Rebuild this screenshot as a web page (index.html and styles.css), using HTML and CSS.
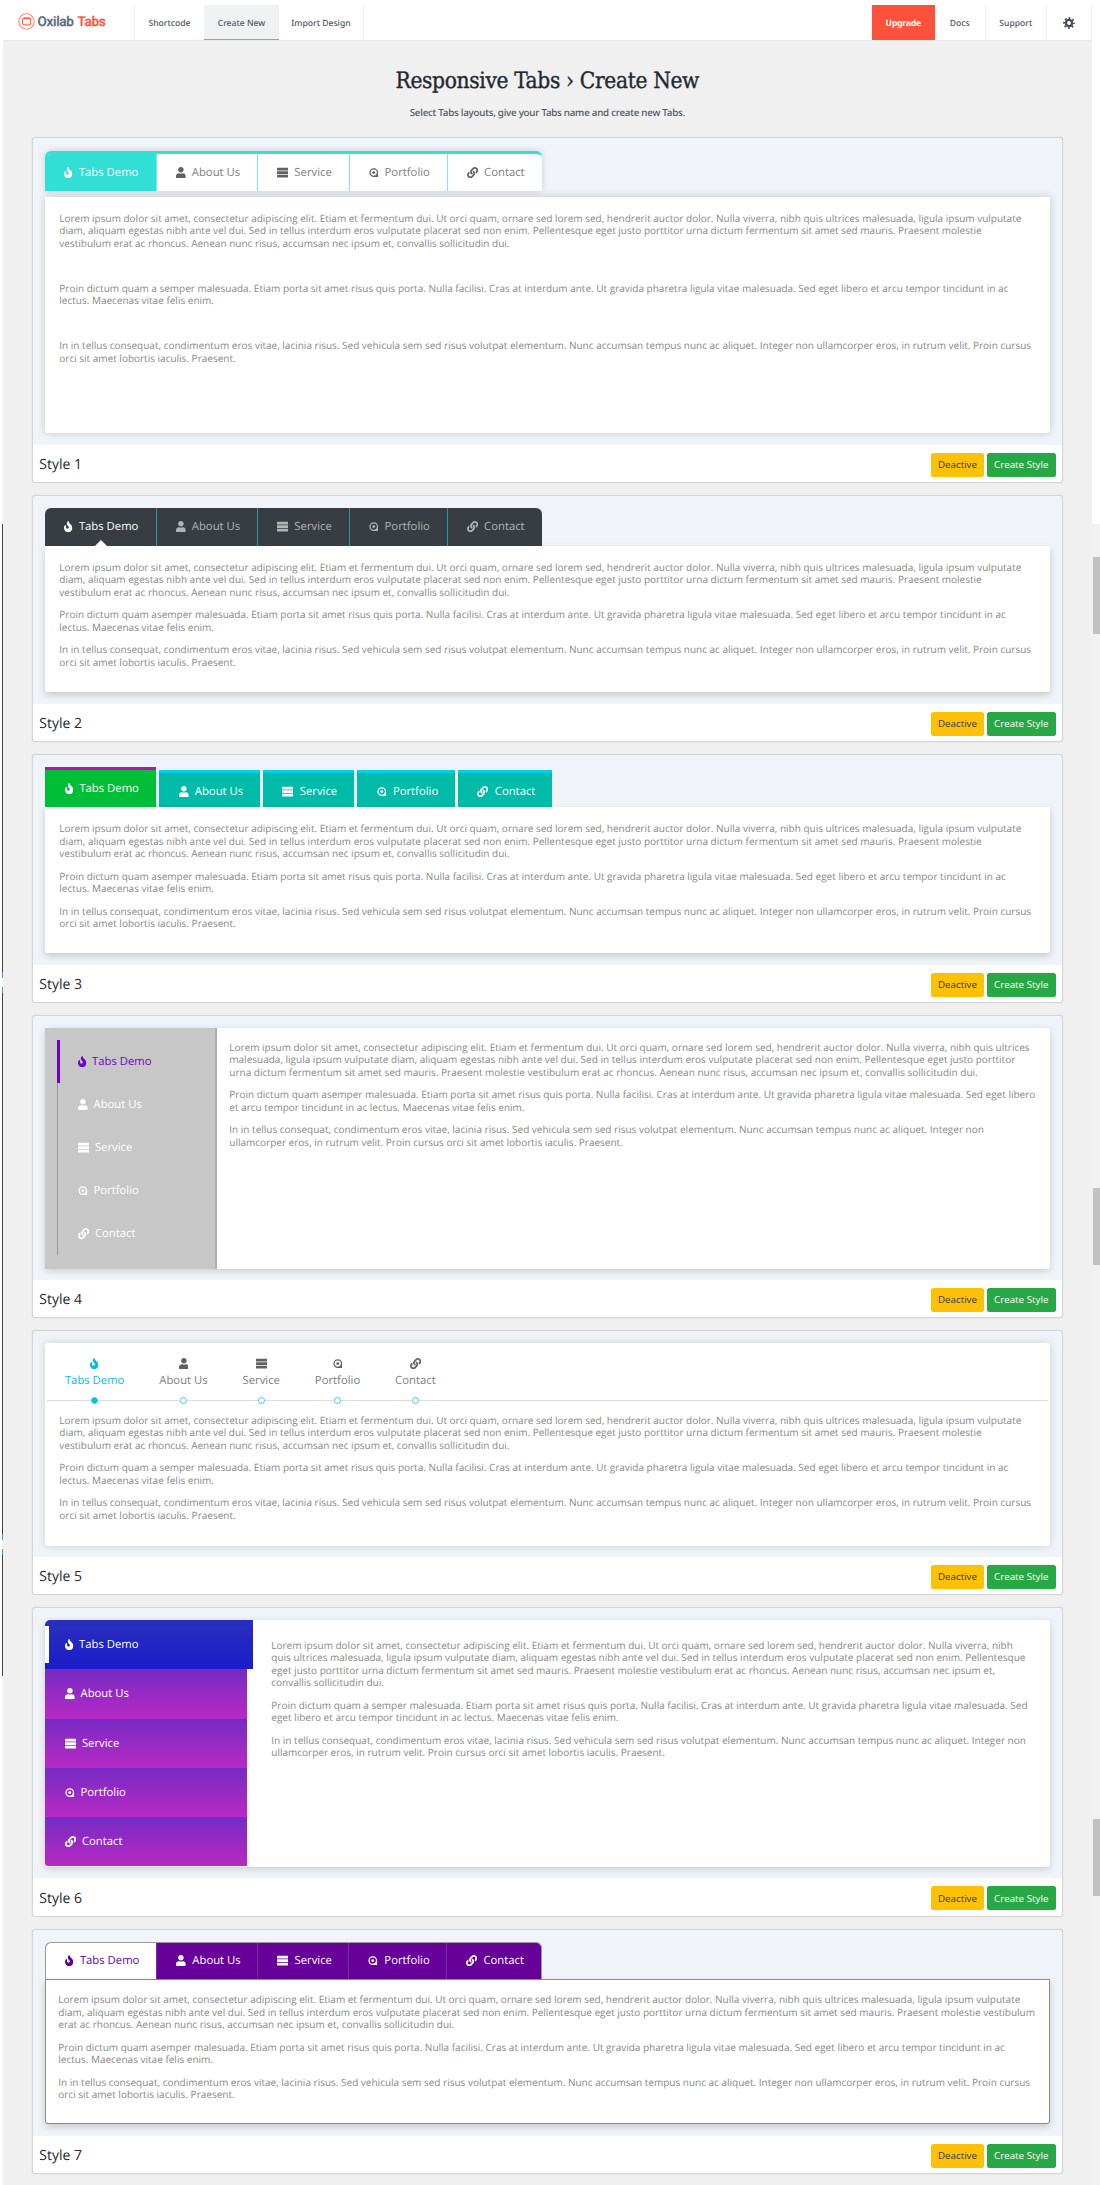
FILE: index.html
```html
<!DOCTYPE html>
<html lang="en">
<head>
<meta charset="utf-8">
<title>Responsive Tabs › Create New</title>
<link rel="stylesheet" href="styles.css">
</head>
<body>
<svg class="sprite" aria-hidden="true">
  <symbol id="fire" viewBox="0 0 384 512"><path d="M216 23.86c0-23.8-30.65-32.77-44.15-13.04C48 191.85 224 200 224 288c0 35.63-29.11 64.46-64.85 63.99-35.17-.45-63.15-29.77-63.15-64.94v-85.51c0-21.7-26.47-32.23-41.43-16.5C27.8 213.16 0 261.33 0 320c0 105.87 86.13 192 192 192s192-86.13 192-192c0-170.29-168-193-168-296.14z"/></symbol>
  <symbol id="user" viewBox="0 0 448 512"><path d="M224 256c70.7 0 128-57.3 128-128S294.7 0 224 0 96 57.3 96 128s57.3 128 128 128zm89.6 32h-16.7c-22.2 10.2-46.9 16-72.9 16s-50.6-5.8-72.9-16h-16.7C60.2 288 0 348.2 0 422.4V464c0 26.5 21.5 48 48 48h352c26.5 0 48-21.5 48-48v-41.6c0-74.2-60.2-134.4-134.4-134.4z"/></symbol>
  <symbol id="server" viewBox="0 0 512 512"><path d="M24 32h464a24 24 0 0 1 24 24v80a24 24 0 0 1-24 24H24a24 24 0 0 1-24-24V56a24 24 0 0 1 24-24zM24 192h464a24 24 0 0 1 24 24v80a24 24 0 0 1-24 24H24a24 24 0 0 1-24-24v-80a24 24 0 0 1 24-24zM24 352h464a24 24 0 0 1 24 24v80a24 24 0 0 1-24 24H24a24 24 0 0 1-24-24v-80a24 24 0 0 1 24-24z"/></symbol>
  <symbol id="portfolio" viewBox="0 0 448 512"><circle cx="218" cy="256" r="172" fill="none" stroke="currentColor" stroke-width="58"/><circle cx="218" cy="256" r="66"/><path d="M218 400h200v58H218zM360 300h58v158h-58z"/></symbol>
  <symbol id="link" viewBox="0 0 512 512"><path d="M326.612 185.391c59.747 59.809 58.927 155.698.36 214.59-.11.12-.24.25-.36.37l-67.2 67.2c-59.27 59.27-155.699 59.262-214.96 0-59.27-59.26-59.27-155.7 0-214.96l37.106-37.106c9.84-9.84 26.786-3.3 27.294 10.606.648 17.722 3.826 35.527 9.69 52.721 1.986 5.822.567 12.262-3.783 16.612l-13.087 13.087c-28.026 28.026-28.905 73.66-1.155 101.96 28.024 28.579 74.086 28.749 102.325.51l67.2-67.19c28.191-28.191 28.073-73.757 0-101.83-3.701-3.694-7.429-6.564-10.341-8.569a16.037 16.037 0 0 1-6.947-12.606c-.396-10.567 3.348-21.456 11.698-29.806l21.054-21.055c5.521-5.521 14.182-6.199 20.584-1.731a152.482 152.482 0 0 1 20.522 17.197zM467.547 44.449c-59.261-59.262-155.69-59.27-214.96 0l-67.2 67.2c-.12.12-.25.25-.36.37-58.566 58.892-59.387 154.781.36 214.59a152.454 152.454 0 0 0 20.521 17.196c6.402 4.468 15.064 3.789 20.584-1.731l21.054-21.055c8.35-8.35 12.094-19.239 11.698-29.806a16.037 16.037 0 0 0-6.947-12.606c-2.912-2.005-6.64-4.875-10.341-8.569-28.073-28.073-28.191-73.639 0-101.83l67.2-67.19c28.239-28.239 74.3-28.069 102.325.51 27.75 28.3 26.872 73.934-1.155 101.96l-13.087 13.087c-4.35 4.35-5.769 10.79-3.783 16.612 5.864 17.194 9.042 34.999 9.69 52.721.509 13.906 17.454 20.446 27.294 10.606l37.106-37.106c59.271-59.259 59.271-155.699.001-214.959z"/></symbol>
</svg>
<div class="shell">
  <aside class="edge-left"><i class="gap1"></i><i class="dark d1"></i><i class="blue"></i><i class="notch"></i><i class="blue"></i><i class="dark d2"></i><i class="blue"></i><i class="notch"></i><i class="blue"></i><i class="dark d3"></i></aside>
  <main class="page">
    <header class="top">
      <div class="brand">
        <svg width="17" height="17" viewBox="0 0 17 17" fill="none" stroke="#ff8a6c"><circle cx="8.5" cy="8.5" r="7.7" stroke-width="1.1"/><rect x="4.6" y="5.2" width="8" height="6.6" rx="1.4" stroke="#ff6f4e" stroke-width="1.3"/><path d="M6 5.4h6" stroke="#ff5a36" stroke-width="1.6"/></svg>
        <span class="name">Oxilab</span><span class="name accent">Tabs</span>
      </div>
      <nav class="menu"><a class="m1">Shortcode</a><a class="m2 current">Create New</a><a class="m3">Import Design</a></nav>
      <nav class="links"><a class="upgrade">Upgrade</a><a class="l2">Docs</a><a class="l3">Support</a><a class="l4"><svg width="12" height="12" viewBox="0 0 22 22" fill="none" stroke="#454d55"><circle cx="11" cy="11" r="5.7" stroke-width="4.4"/><circle cx="11" cy="11" r="9.2" stroke-width="3.4" pathLength="160" stroke-dasharray="9 11" stroke-dashoffset="4.5"/></svg></a></nav>
    </header>
    <h1><span>Responsive Tabs › Create New</span></h1>
    <p class="lead">Select Tabs layouts, give your Tabs name and create new Tabs.</p>

    <section class="card c1">
      <div class="tabs bar">
        <a class="on"><svg class="i fire"><use href="#fire"/></svg>Tabs Demo</a><a><svg class="i user"><use href="#user"/></svg>About Us</a><a><svg class="i server"><use href="#server"/></svg>Service</a><a><svg class="i user"><use href="#portfolio"/></svg>Portfolio</a><a><svg class="i server"><use href="#link"/></svg>Contact</a>
      </div>
      <div class="panel">
        <p>Lorem ipsum dolor sit amet, consectetur adipiscing elit. Etiam et fermentum dui. Ut orci quam, ornare sed lorem sed, hendrerit auctor dolor. Nulla viverra, nibh quis ultrices malesuada, ligula ipsum vulputate<br>diam, aliquam egestas nibh ante vel dui. Sed in tellus interdum eros vulputate placerat sed non enim. Pellentesque eget justo porttitor urna dictum fermentum sit amet sed mauris. Praesent molestie<br>vestibulum erat ac rhoncus. Aenean nunc risus, accumsan nec ipsum et, convallis sollicitudin dui.</p>
        <p>&nbsp;</p>
        <p>Proin dictum quam a semper malesuada. Etiam porta sit amet risus quis porta. Nulla facilisi. Cras at interdum ante. Ut gravida pharetra ligula vitae malesuada. Sed eget libero et arcu tempor tincidunt in ac<br>lectus. Maecenas vitae felis enim.</p>
        <p>&nbsp;</p>
        <p>In in tellus consequat, condimentum eros vitae, lacinia risus. Sed vehicula sem sed risus volutpat elementum. Nunc accumsan tempus nunc ac aliquet. Integer non ullamcorper eros, in rutrum velit. Proin cursus<br>orci sit amet lobortis iaculis. Praesent.</p>
      </div>
      <footer><h2>Style 1</h2><button class="warn">Deactive</button><button class="ok">Create Style</button></footer>
    </section>

    <section class="card c2">
      <div class="tabs bar">
        <a class="on"><svg class="i fire"><use href="#fire"/></svg>Tabs Demo</a><a><svg class="i user"><use href="#user"/></svg>About Us</a><a><svg class="i server"><use href="#server"/></svg>Service</a><a><svg class="i user"><use href="#portfolio"/></svg>Portfolio</a><a><svg class="i server"><use href="#link"/></svg>Contact</a>
      </div>
      <div class="panel">
        <p>Lorem ipsum dolor sit amet, consectetur adipiscing elit. Etiam et fermentum dui. Ut orci quam, ornare sed lorem sed, hendrerit auctor dolor. Nulla viverra, nibh quis ultrices malesuada, ligula ipsum vulputate<br>diam, aliquam egestas nibh ante vel dui. Sed in tellus interdum eros vulputate placerat sed non enim. Pellentesque eget justo porttitor urna dictum fermentum sit amet sed mauris. Praesent molestie<br>vestibulum erat ac rhoncus. Aenean nunc risus, accumsan nec ipsum et, convallis sollicitudin dui.</p>
        <p>Proin dictum quam asemper malesuada. Etiam porta sit amet risus quis porta. Nulla facilisi. Cras at interdum ante. Ut gravida pharetra ligula vitae malesuada. Sed eget libero et arcu tempor tincidunt in ac<br>lectus. Maecenas vitae felis enim.</p>
        <p>In in tellus consequat, condimentum eros vitae, lacinia risus. Sed vehicula sem sed risus volutpat elementum. Nunc accumsan tempus nunc ac aliquet. Integer non ullamcorper eros, in rutrum velit. Proin cursus<br>orci sit amet lobortis iaculis. Praesent.</p>
      </div>
      <footer><h2>Style 2</h2><button class="warn">Deactive</button><button class="ok">Create Style</button></footer>
    </section>

    <section class="card c3">
      <div class="tabs blocks">
        <a class="on"><svg class="i fire"><use href="#fire"/></svg>Tabs Demo</a><a><svg class="i user"><use href="#user"/></svg>About Us</a><a><svg class="i server"><use href="#server"/></svg>Service</a><a><svg class="i user"><use href="#portfolio"/></svg>Portfolio</a><a><svg class="i server"><use href="#link"/></svg>Contact</a>
      </div>
      <div class="panel">
        <p>Lorem ipsum dolor sit amet, consectetur adipiscing elit. Etiam et fermentum dui. Ut orci quam, ornare sed lorem sed, hendrerit auctor dolor. Nulla viverra, nibh quis ultrices malesuada, ligula ipsum vulputate<br>diam, aliquam egestas nibh ante vel dui. Sed in tellus interdum eros vulputate placerat sed non enim. Pellentesque eget justo porttitor urna dictum fermentum sit amet sed mauris. Praesent molestie<br>vestibulum erat ac rhoncus. Aenean nunc risus, accumsan nec ipsum et, convallis sollicitudin dui.</p>
        <p>Proin dictum quam asemper malesuada. Etiam porta sit amet risus quis porta. Nulla facilisi. Cras at interdum ante. Ut gravida pharetra ligula vitae malesuada. Sed eget libero et arcu tempor tincidunt in ac<br>lectus. Maecenas vitae felis enim.</p>
        <p>In in tellus consequat, condimentum eros vitae, lacinia risus. Sed vehicula sem sed risus volutpat elementum. Nunc accumsan tempus nunc ac aliquet. Integer non ullamcorper eros, in rutrum velit. Proin cursus<br>orci sit amet lobortis iaculis. Praesent.</p>
      </div>
      <footer><h2>Style 3</h2><button class="warn">Deactive</button><button class="ok">Create Style</button></footer>
    </section>

    <section class="card c4">
      <div class="split">
        <div class="side"><div class="rail">
          <a class="on"><svg class="i fire"><use href="#fire"/></svg>Tabs Demo</a><a><svg class="i user"><use href="#user"/></svg>About Us</a><a><svg class="i server"><use href="#server"/></svg>Service</a><a><svg class="i user"><use href="#portfolio"/></svg>Portfolio</a><a><svg class="i server"><use href="#link"/></svg>Contact</a>
        </div></div>
        <div class="text">
          <p>Lorem ipsum dolor sit amet, consectetur adipiscing elit. Etiam et fermentum dui. Ut orci quam, ornare sed lorem sed, hendrerit auctor dolor. Nulla viverra, nibh quis ultrices<br>malesuada, ligula ipsum vulputate diam, aliquam egestas nibh ante vel dui. Sed in tellus interdum eros vulputate placerat sed non enim. Pellentesque eget justo porttitor<br>urna dictum fermentum sit amet sed mauris. Praesent molestie vestibulum erat ac rhoncus. Aenean nunc risus, accumsan nec ipsum et, convallis sollicitudin dui.</p>
          <p>Proin dictum quam asemper malesuada. Etiam porta sit amet risus quis porta. Nulla facilisi. Cras at interdum ante. Ut gravida pharetra ligula vitae malesuada. Sed eget libero<br>et arcu tempor tincidunt in ac lectus. Maecenas vitae felis enim.</p>
          <p>In in tellus consequat, condimentum eros vitae, lacinia risus. Sed vehicula sem sed risus volutpat elementum. Nunc accumsan tempus nunc ac aliquet. Integer non<br>ullamcorper eros, in rutrum velit. Proin cursus orci sit amet lobortis iaculis. Praesent.</p>
        </div>
      </div>
      <footer><h2>Style 4</h2><button class="warn">Deactive</button><button class="ok">Create Style</button></footer>
    </section>

    <section class="card c5">
      <div class="panel">
        <div class="steps">
          <a class="on"><svg class="i fire"><use href="#fire"/></svg>Tabs Demo<b></b></a><a><svg class="i user"><use href="#user"/></svg>About Us<b></b></a><a><svg class="i server"><use href="#server"/></svg>Service<b></b></a><a><svg class="i user"><use href="#portfolio"/></svg>Portfolio<b></b></a><a><svg class="i server"><use href="#link"/></svg>Contact<b></b></a>
        </div>
        <p>Lorem ipsum dolor sit amet, consectetur adipiscing elit. Etiam et fermentum dui. Ut orci quam, ornare sed lorem sed, hendrerit auctor dolor. Nulla viverra, nibh quis ultrices malesuada, ligula ipsum vulputate<br>diam, aliquam egestas nibh ante vel dui. Sed in tellus interdum eros vulputate placerat sed non enim. Pellentesque eget justo porttitor urna dictum fermentum sit amet sed mauris. Praesent molestie<br>vestibulum erat ac rhoncus. Aenean nunc risus, accumsan nec ipsum et, convallis sollicitudin dui.</p>
        <p>Proin dictum quam a semper malesuada. Etiam porta sit amet risus quis porta. Nulla facilisi. Cras at interdum ante. Ut gravida pharetra ligula vitae malesuada. Sed eget libero et arcu tempor tincidunt in ac<br>lectus. Maecenas vitae felis enim.</p>
        <p>In in tellus consequat, condimentum eros vitae, lacinia risus. Sed vehicula sem sed risus volutpat elementum. Nunc accumsan tempus nunc ac aliquet. Integer non ullamcorper eros, in rutrum velit. Proin cursus<br>orci sit amet lobortis iaculis. Praesent.</p>
      </div>
      <footer><h2>Style 5</h2><button class="warn">Deactive</button><button class="ok">Create Style</button></footer>
    </section>

    <section class="card c6">
      <div class="split">
        <div class="stack">
          <a class="on"><svg class="i fire"><use href="#fire"/></svg>Tabs Demo</a><a><svg class="i user"><use href="#user"/></svg>About Us</a><a><svg class="i server"><use href="#server"/></svg>Service</a><a><svg class="i user"><use href="#portfolio"/></svg>Portfolio</a><a><svg class="i server"><use href="#link"/></svg>Contact</a>
        </div>
        <div class="text">
          <p>Lorem ipsum dolor sit amet, consectetur adipiscing elit. Etiam et fermentum dui. Ut orci quam, ornare sed lorem sed, hendrerit auctor dolor. Nulla viverra, nibh<br>quis ultrices malesuada, ligula ipsum vulputate diam, aliquam egestas nibh ante vel dui. Sed in tellus interdum eros vulputate placerat sed non enim. Pellentesque<br>eget justo porttitor urna dictum fermentum sit amet sed mauris. Praesent molestie vestibulum erat ac rhoncus. Aenean nunc risus, accumsan nec ipsum et,<br>convallis sollicitudin dui.</p>
          <p>Proin dictum quam a semper malesuada. Etiam porta sit amet risus quis porta. Nulla facilisi. Cras at interdum ante. Ut gravida pharetra ligula vitae malesuada. Sed<br>eget libero et arcu tempor tincidunt in ac lectus. Maecenas vitae felis enim.</p>
          <p>In in tellus consequat, condimentum eros vitae, lacinia risus. Sed vehicula sem sed risus volutpat elementum. Nunc accumsan tempus nunc ac aliquet. Integer non<br>ullamcorper eros, in rutrum velit. Proin cursus orci sit amet lobortis iaculis. Praesent.</p>
        </div>
      </div>
      <footer><h2>Style 6</h2><button class="warn">Deactive</button><button class="ok">Create Style</button></footer>
    </section>

    <section class="card c7">
      <div class="tabs bar">
        <a class="on"><svg class="i fire"><use href="#fire"/></svg>Tabs Demo</a><a><svg class="i user"><use href="#user"/></svg>About Us</a><a><svg class="i server"><use href="#server"/></svg>Service</a><a><svg class="i user"><use href="#portfolio"/></svg>Portfolio</a><a><svg class="i server"><use href="#link"/></svg>Contact</a>
      </div>
      <div class="panel">
        <p>Lorem ipsum dolor sit amet, consectetur adipiscing elit. Etiam et fermentum dui. Ut orci quam, ornare sed lorem sed, hendrerit auctor dolor. Nulla viverra, nibh quis ultrices malesuada, ligula ipsum vulputate<br>diam, aliquam egestas nibh ante vel dui. Sed in tellus interdum eros vulputate placerat sed non enim. Pellentesque eget justo porttitor urna dictum fermentum sit amet sed mauris. Praesent molestie vestibulum<br>erat ac rhoncus. Aenean nunc risus, accumsan nec ipsum et, convallis sollicitudin dui.</p>
        <p>Proin dictum quam asemper malesuada. Etiam porta sit amet risus quis porta. Nulla facilisi. Cras at interdum ante. Ut gravida pharetra ligula vitae malesuada. Sed eget libero et arcu tempor tincidunt in ac<br>lectus. Maecenas vitae felis enim.</p>
        <p>In in tellus consequat, condimentum eros vitae, lacinia risus. Sed vehicula sem sed risus volutpat elementum. Nunc accumsan tempus nunc ac aliquet. Integer non ullamcorper eros, in rutrum velit. Proin cursus<br>orci sit amet lobortis iaculis. Praesent.</p>
      </div>
      <footer><h2>Style 7</h2><button class="warn">Deactive</button><button class="ok">Create Style</button></footer>
    </section>
  </main>
  <aside class="edge-right"><i class="blank"></i><i class="thumb t1"></i><i class="thumb t2"></i><i class="thumb t3"></i></aside>
</div>
</body>
</html>
```
FILE: styles.css
```css
* { box-sizing: border-box; }
body { margin: 0; background: #fff; font-family: "Open Sans", "Noto Sans", sans-serif; color: #888; text-rendering: geometricPrecision; }
h1, h2, p { margin: 0; font-weight: 400; }
i { display: block; }
.sprite { display: none; }
.shell { display: grid; grid-template-columns: 3px 1088.5px 1fr; height: 2185px; overflow: hidden; }

/* window edges */
.edge-left { padding-left: 1.5px; }
.gap1 { height: 524px; }
.dark { background: #3c4248; }
.d1 { height: 448px; }
.d2 { height: 541px; }
.d3 { height: 121px; }
.blue { height: 6px; background: #3a9bd4; }
.notch { height: 9px; background: #fff; }
.edge-right { background: #f1f1f1; }
.blank { height: 524px; background: #fff; }
.thumb { height: 77px; margin-left: 1.5px; background: #c1c1c1; }
.t1 { margin-top: 33px; }
.t2, .t3 { margin-top: 554px; }

.page { background: #f0f0f1; padding-right: 28.8px; }

/* top bar */
.top { display: flex; height: 41px; margin-right: -28.8px; padding-top: 5px; background: #fff; border-bottom: 1px solid #e9e9ea; }
.brand { display: flex; align-items: center; width: 132px; padding: 0 0 2px 15px; border-right: 1px solid #f0f0f1; }
.name { margin-left: 2.5px; font: 500 13.5px Roboto, sans-serif; color: #5b6b7c; letter-spacing: -.3px; -webkit-text-stroke: .25px; }
.name.accent { margin-left: 4px; color: #fb543b; }
.menu, .links { display: flex; font: 500 8.6px "Noto Sans", sans-serif; color: #50575e; }
.menu a, .links a { display: flex; align-items: center; justify-content: center; padding-top: 1px; }
.m1 { width: 69px; }
.m2 { width: 75px; background: #f0f1f3; border-bottom: 1px solid #f57c6b; }
.m3 { width: 85px; border-right: 1px solid #f0f0f1; }
.links { margin-left: auto; }
.upgrade { width: 63.5px; background: #fc523b; color: #fff; font-weight: 700; letter-spacing: -.2px; }
.l2 { width: 50.5px; border-right: 1px solid #f0f0f1; }
.l3 { width: 61.5px; border-right: 1px solid #f0f0f1; }
.l4 { width: 44.5px; border-right: 1px solid #f0f0f1; }

h1 { height: 30px; margin: 24.5px 0 0 29px; text-align: center; white-space: nowrap; font: 400 22.5px/30px "DejaVu Serif Condensed", "DejaVu Serif", serif; color: #23282d; }
h1 span { display: inline-block; letter-spacing: -.35px; -webkit-text-stroke: .35px; }
.lead { height: 15px; margin: 9px 0 17.5px 29px; text-align: center; font: 500 9.8px/15px "Noto Sans", sans-serif; letter-spacing: -.25px; color: #50575e; }

/* cards */
.card { display: flex; flex-direction: column; margin: 0 0 12px 29.3px; padding: 12px 12px 0; background: #f0f4f8; border: 1px solid #d3d5d7; border-radius: 3px; box-shadow: 0 0 1px #ccc; white-space: nowrap; }
.c1 { height: 346px; }
.c2 { height: 247px; }
.c3 { height: 249px; }
.c4 { height: 303px; }
.c5 { height: 265px; }
.c6 { height: 309.5px; }
.c7 { height: 245.5px; }
.card footer { display: flex; align-items: center; gap: 2.5px; height: 37.5px; flex: none; margin: auto -12px 0; padding: 2.5px 6px 0; background: #fff; border-radius: 0 0 3px 3px; }
h2 { margin-right: auto; font-size: 14px; color: #23282d; }
button { height: 24px; padding: 0; border: 0; border-radius: 2.5px; font: 9.8px "Open Sans", sans-serif; }
.warn { width: 53.5px; background: #ffc107; color: #343a40; }
.ok { width: 69px; background: #28a745; color: #fff; }

.panel { padding: 15px 14px; background: #fff; border-radius: 0 0 3px 3px; box-shadow: 0 3px 7px rgba(0, 0, 0, .18); font-size: 10px; line-height: 12.6px; color: #888; }
.panel p, .text p { margin-bottom: 9.9px; }
.i { height: 11.2px; flex: none; fill: currentColor; margin-right: 6.2px; }
.fire { width: 8.4px; }
.user { width: 9.8px; }
.server { width: 11.2px; }

.tabs { display: flex; font-size: 11.3px; }
.tabs a { display: flex; align-items: center; padding-left: 19px; }
.bar { width: 497px; border-radius: 6px 6px 0 0; overflow: hidden; }
.bar a:nth-child(1) { width: 111.5px; }
.bar a:nth-child(2) { width: 101.2px; }
.bar a:nth-child(3) { width: 91.6px; }
.bar a:nth-child(4) { width: 98.1px; }
.bar a:nth-child(5) { width: 94.6px; }

.c1 .tabs { height: 40.5px; margin-top: .5px; background: #fff; border-top: 3px solid #31dfd5; box-shadow: 0 0 7px rgba(0, 0, 0, .15); }
.c1 .tabs a { border-right: 1px solid #7fe9e3; color: #808080; }
.c1 .i { color: #5f6163; }
.c1 .tabs .on, .c1 .on .i { background: #31dfd5; color: #fff; }
.c1 .tabs a:last-child { border: 0; }
.c1 .panel { margin-top: 5.5px; height: 236.5px; box-shadow: 0 0 8px rgba(0, 0, 0, .18); }

.c2 .tabs { height: 37.5px; background: #383d43; overflow: visible; position: relative; }
.c2 .tabs a { position: relative; border-right: 1px solid #2b9a96; color: #b2b4b6; }
.c2 .tabs a.on { color: #fff; }
.c2 .tabs a:last-child { border: 0; }
.c2 .on::after { content: ""; position: absolute; left: 50px; bottom: 0; border: solid transparent; border-width: 0 6px 6px; border-bottom-color: #fff; }
.c2 .panel, .c3 .panel { height: 146.3px; }

.blocks { gap: 3px; align-items: flex-end; height: 40px; }
.tabs.blocks a { height: 37px; padding: 2.5px 0 0 19.5px; background: #00bba7; border-top: 3px solid #00d0e6; color: #fff; }
.tabs.blocks a.on { width: 111px; height: 40px; padding-top: 0; background: #00bf36; border-top-color: #c00fae; }
.blocks a:nth-child(2) { width: 100.6px; }
.blocks a:nth-child(3) { width: 91.5px; }
.blocks a:nth-child(4) { width: 97.5px; }
.blocks a:nth-child(5) { width: 94.5px; }

.split { display: flex; background: #fff; border-radius: 3px; box-shadow: 0 2px 7px rgba(0, 0, 0, .16); }
.split a { display: flex; align-items: center; font-size: 11.3px; color: #fff; }
.split .i { margin-right: 5.4px; }
.text { font-size: 10px; line-height: 12.6px; color: #888; }
.c4 .split { height: 240.5px; border-radius: 0 3px 3px 0; }
.side { width: 172px; padding: 12px 0 0 12px; background: #c7c7c7; border-right: 2px solid #adadad; }
.rail { width: 150px; border-left: 1px solid #999; }
.rail a { height: 43.1px; padding-left: 20px; }
.rail .on { margin-left: -1px; padding-left: 18px; border-left: 3px solid #7400c4; color: #7400c4; }
.c4 .text { padding: 12.5px 0 0 12px; }

.c5 .panel { height: 202.5px; padding: 14.5px 2px; border-radius: 3px; box-shadow: 0 0 8px rgba(0, 0, 0, .15); }
.c5 .panel p { margin-left: 12px; }
.steps { display: flex; height: 43.5px; margin-bottom: 12.5px; padding-left: 17.6px; gap: 34.9px; border-bottom: 1px solid #ddd; font-size: 11.3px; color: #808080; }
.steps a { display: flex; flex-direction: column; align-items: center; height: 46px; line-height: 15px; }
.steps .i { margin: 0 0 4px; color: #5f6163; }
.steps b { flex: none; width: 7px; height: 7px; margin-top: 9.3px; border: 1px solid #3fcbe6; border-radius: 50%; background: #fff; }
.steps .on, .steps .on .i { color: #0bbbdf; }
.steps .on b { background: #0bbbdf; }

.c6 .split { height: 246.5px; }
.stack { width: 201.5px; }
.stack a { height: 49.3px; padding-left: 20px; background: linear-gradient(#752bc4, #b929c4); }
.stack .on { width: 208px; background: linear-gradient(#2a2ebd, #191dc9); border-radius: 5px 0 0 0; position: relative; }
.stack .on::before { content: ""; position: absolute; left: 0; top: 6px; width: 4px; height: 37px; background: #fff; }
.stack a:last-child { border-radius: 0 0 0 3px; }
.c6 .text { padding: 18.5px 0 0 24.5px; }

.c7 .tabs { height: 37.5px; background: #660099; border: 1px solid #999; border-width: 1px 1px 0; }
.c7 .tabs a { border-right: 1px solid #7b2b9d; color: #fff; }
.c7 .tabs a:last-child { border: 0; }
.c7 .tabs .on { background: #fff; color: #660099; }
.c7 .panel { height: 145px; padding: 13px 12px; border: 1px solid #8b8b8b; }
```
